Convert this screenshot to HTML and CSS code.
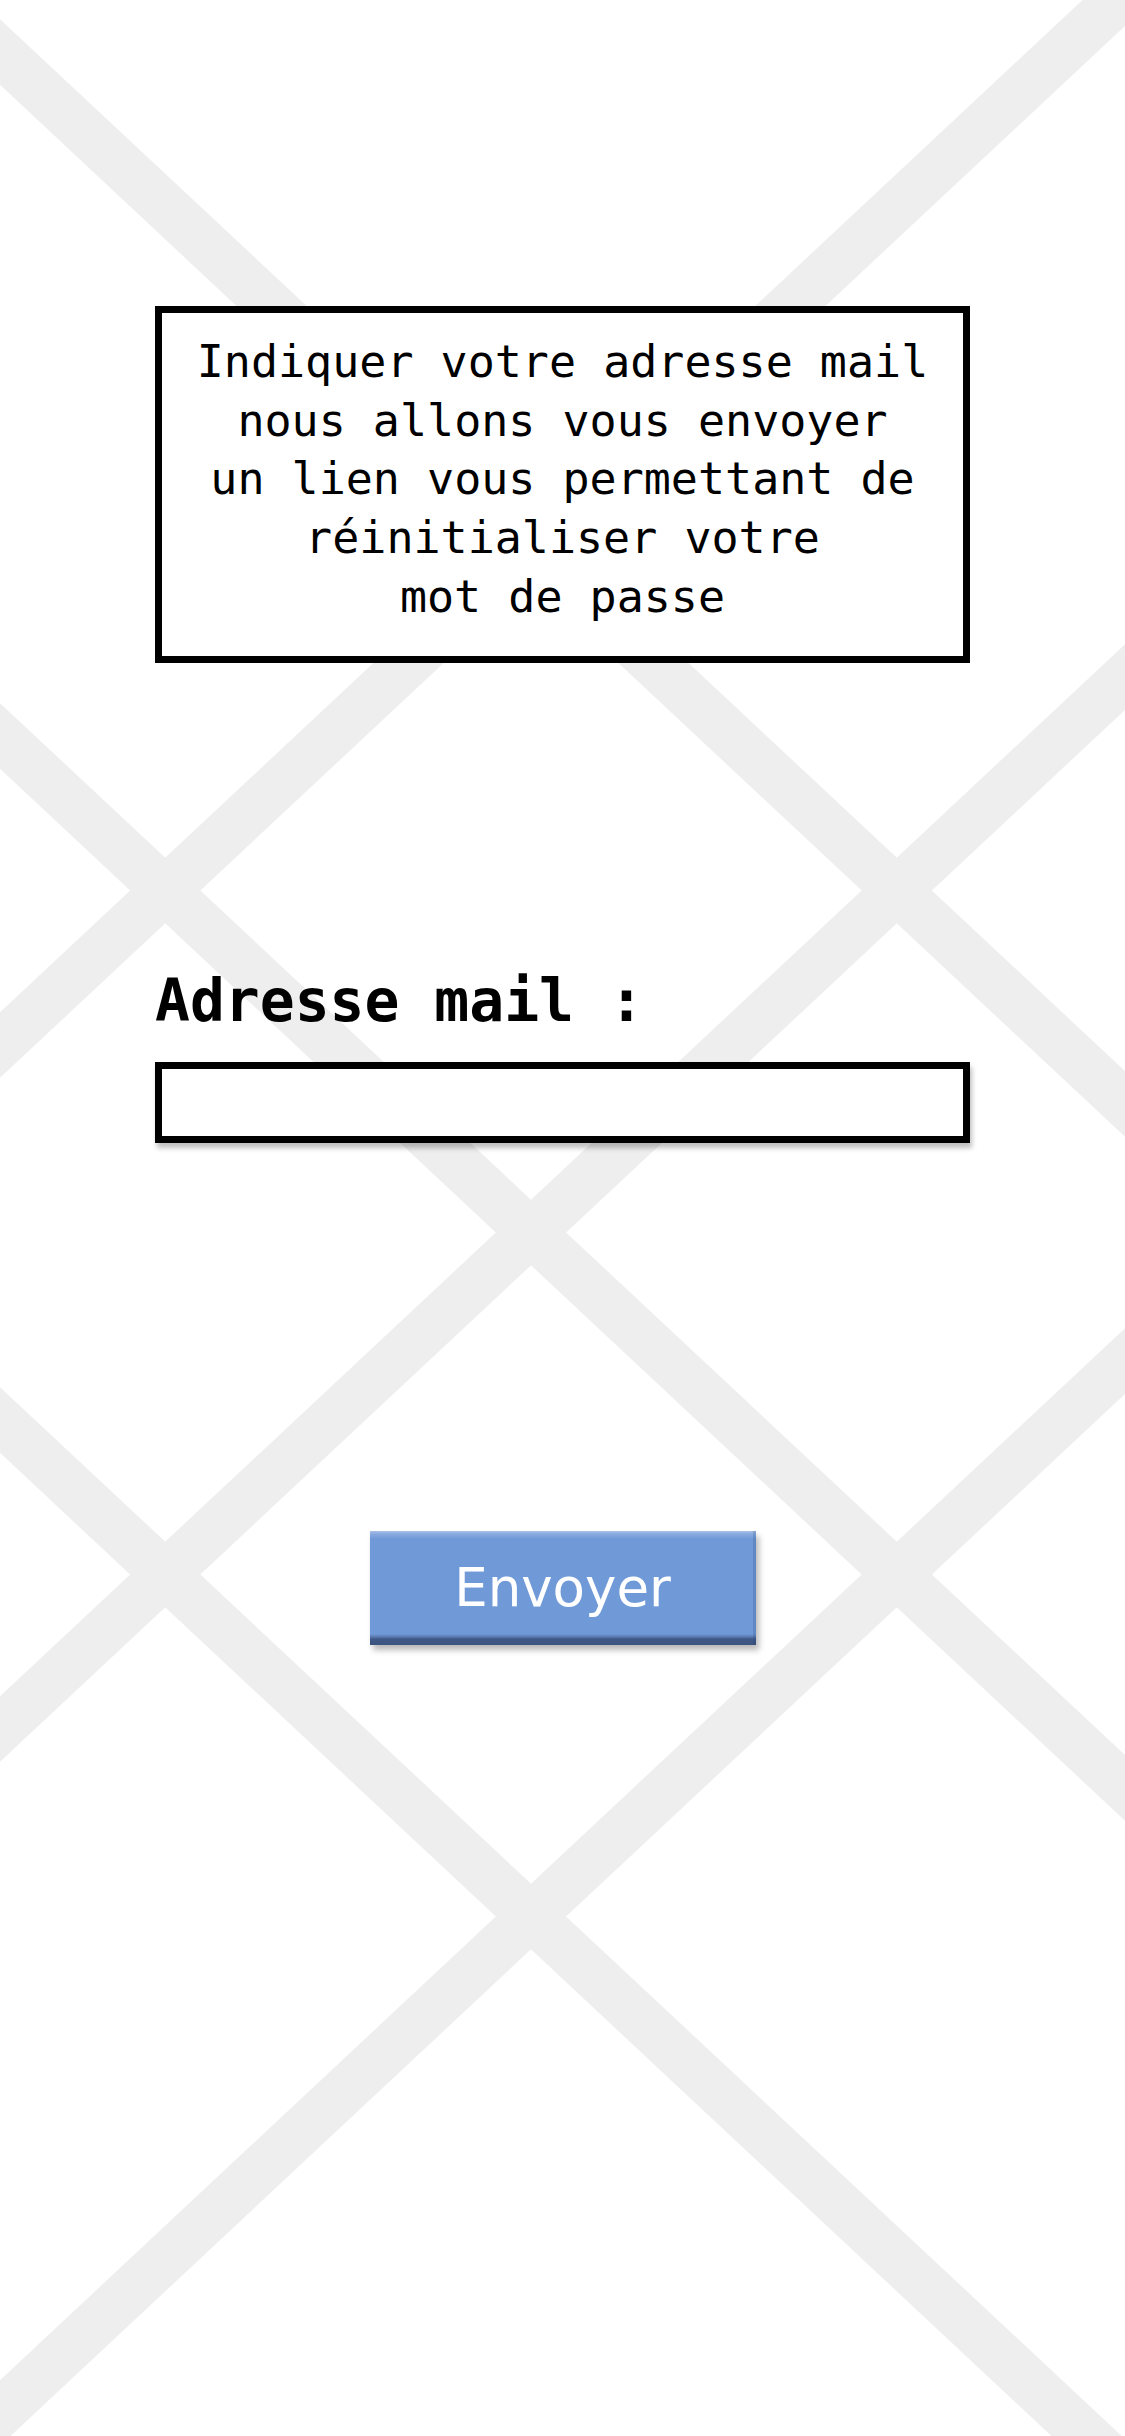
FILE: index.html
```html
<!DOCTYPE html>
<html lang="fr">
<head>
<meta charset="utf-8">
<title>Mot de passe oublié</title>
<link rel="stylesheet" href="styles.css">
</head>
<body>
<div class="screen">
  <svg class="bg" viewBox="0 0 1125 2436" width="1125" height="2436" aria-hidden="true">
    <g stroke="#eeeeee" stroke-width="48" fill="none">
      <line x1="-60" y1="-4.1" x2="1185" y2="1160"/>
      <line x1="-60" y1="1101.1" x2="1185" y2="-63"/>
      <line x1="-60" y1="679.9" x2="1185" y2="1844"/>
      <line x1="-60" y1="1785.1" x2="1185" y2="621"/>
      <line x1="-60" y1="1363.9" x2="1185" y2="2528"/>
      <line x1="-60" y1="2469.1" x2="1185" y2="1305"/>
    </g>
  </svg>
  <main class="content">
    <div class="notice">Indiquer votre adresse mail<br>nous allons vous envoyer<br>un lien vous permettant de<br>réinitialiser votre<br>mot de passe</div>
    <label class="label" for="email">Adresse mail :</label>
    <input id="email" class="field" type="email">
    <button class="btn" type="button">Envoyer</button>
  </main>
</div>
</body>
</html>
```
FILE: styles.css
```css
html, body {
  margin: 0;
  padding: 0;
  background: #ffffff;
}

.screen {
  position: relative;
  width: 1125px;
  height: 2436px;
  overflow: hidden;
  background: #ffffff;
}

.bg {
  position: absolute;
  left: 0;
  top: 0;
  z-index: 0;
}

.content {
  position: relative;
  z-index: 1;
  width: 815px;
  margin: 0 auto;
  padding-top: 306px;
  display: flex;
  flex-direction: column;
}

.notice {
  box-sizing: border-box;
  height: 357px;
  border: 7px solid #000000;
  background: #ffffff;
  padding-top: 20px;
  text-align: center;
  font-family: "DejaVu Sans Mono", "Liberation Mono", monospace;
  font-size: 45px;
  line-height: 58.7px;
  color: #000000;
}

.label {
  margin-top: 304px;
  font-family: "DejaVu Sans Mono", "Liberation Mono", monospace;
  font-weight: bold;
  font-size: 58px;
  line-height: 68px;
  color: #000000;
}

.field {
  margin: 27px 0 0 0;
  box-sizing: border-box;
  width: 815px;
  height: 81px;
  padding: 0 12px;
  border: 7px solid #000000;
  border-radius: 0;
  background: #ffffff;
  box-shadow: 2px 5px 5px rgba(0, 0, 0, 0.25);
  outline: none;
  font-family: "DejaVu Sans Mono", monospace;
  font-size: 40px;
}

.btn {
  align-self: center;
  margin-top: 388px;
  box-sizing: border-box;
  width: 386px;
  height: 114px;
  padding: 0;
  border: none;
  border-radius: 0;
  background: linear-gradient(to bottom,
    #a9c0e7 0px,
    #89aae0 3px,
    #7099d8 8px,
    #7099d8 calc(100% - 11px),
    #5878ad calc(100% - 8px),
    #3f5987 calc(100% - 6px),
    #3b5380 100%);
  box-shadow: inset -3px 0 0 rgba(30, 60, 110, 0.18), 3px 5px 6px rgba(0, 0, 0, 0.28);
  color: #ffffff;
  font-family: "DejaVu Sans", "Liberation Sans", sans-serif;
  font-size: 53px;
  line-height: 114px;
  display: flex;
  align-items: center;
  justify-content: center;
}
```
